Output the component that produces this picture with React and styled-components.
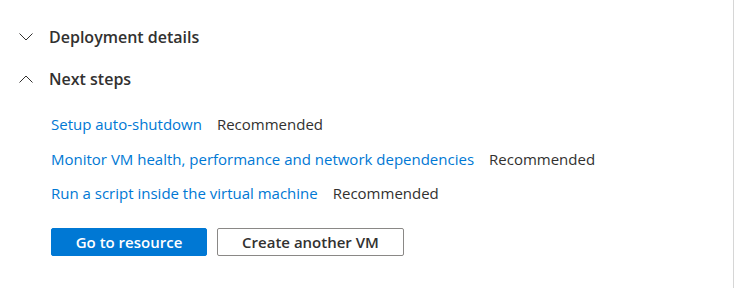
import React from "react";
import styled, { createGlobalStyle } from "styled-components";

const GlobalStyle = createGlobalStyle`
  html, body { margin: 0; padding: 0; background: #ffffff; }
  body { font-family: "Open Sans", "Noto Sans", sans-serif; color: #323130; }
  * { box-sizing: border-box; }
`;

const Panel = styled.div`
  width: 734px;
  height: 288px;
  border-right: 1px solid #d6d6d6;
  padding-top: 16px;
  display: flex;
  flex-direction: column;
`;

const SectionHeader = styled.div`
  height: 42px;
  display: flex;
  align-items: center;
  gap: 16px;
  padding-left: 19px;
`;

const ChevronBox = styled.span`
  width: 14px;
  height: 14px;
  display: flex;
  align-items: center;
  justify-content: center;
`;

const Title = styled.span`
  font-size: 16px;
  font-weight: 600;
  line-height: 22px;
  color: #323130;
`;

const Content = styled.div`
  padding-left: 51px;
  padding-top: 14px;
  display: flex;
  flex-direction: column;
`;

const StepList = styled.div`
  display: flex;
  flex-direction: column;
  gap: 14.5px;
`;

const StepRow = styled.div`
  display: flex;
  align-items: center;
  gap: 15px;
  font-size: 15px;
  line-height: 20px;
`;

const StepLink = styled.a`
  color: #0078d4;
  text-decoration: none;
  cursor: pointer;
`;

const Tag = styled.span`
  color: #323130;
`;

const Actions = styled.div`
  display: flex;
  gap: 10px;
  margin-top: 25px;
`;

const Button = styled.button`
  height: 28px;
  width: ${(p) => p.$width}px;
  padding: 0;
  border-radius: 2px;
  font-family: "Open Sans", "Noto Sans", sans-serif;
  font-size: 15px;
  font-weight: 600;
  cursor: pointer;
  border: 1px solid ${(p) => (p.$primary ? "#0078d4" : "#8a8886")};
  background: ${(p) => (p.$primary ? "#0078d4" : "#ffffff")};
  color: ${(p) => (p.$primary ? "#ffffff" : "#323130")};
`;

function Chevron({ up }) {
  return (
    <ChevronBox>
      <svg width="14" height="8" viewBox="0 0 14 8" fill="none">
        <polyline
          points={up ? "0.5,7.5 7,1 13.5,7.5" : "0.5,0.5 7,7 13.5,0.5"}
          stroke="#323130"
          strokeWidth="1"
        />
      </svg>
    </ChevronBox>
  );
}

const steps = [
  "Setup auto-shutdown",
  "Monitor VM health, performance and network dependencies",
  "Run a script inside the virtual machine",
];

export default function App() {
  return (
    <>
      <GlobalStyle />
      <Panel>
        <SectionHeader>
          <Chevron />
          <Title>Deployment details</Title>
        </SectionHeader>
        <SectionHeader>
          <Chevron up />
          <Title>Next steps</Title>
        </SectionHeader>
        <Content>
          <StepList>
            {steps.map((s) => (
              <StepRow key={s}>
                <StepLink>{s}</StepLink>
                <Tag>Recommended</Tag>
              </StepRow>
            ))}
          </StepList>
          <Actions>
            <Button $primary $width={156}>Go to resource</Button>
            <Button $width={187}>Create another VM</Button>
          </Actions>
        </Content>
      </Panel>
    </>
  );
}
